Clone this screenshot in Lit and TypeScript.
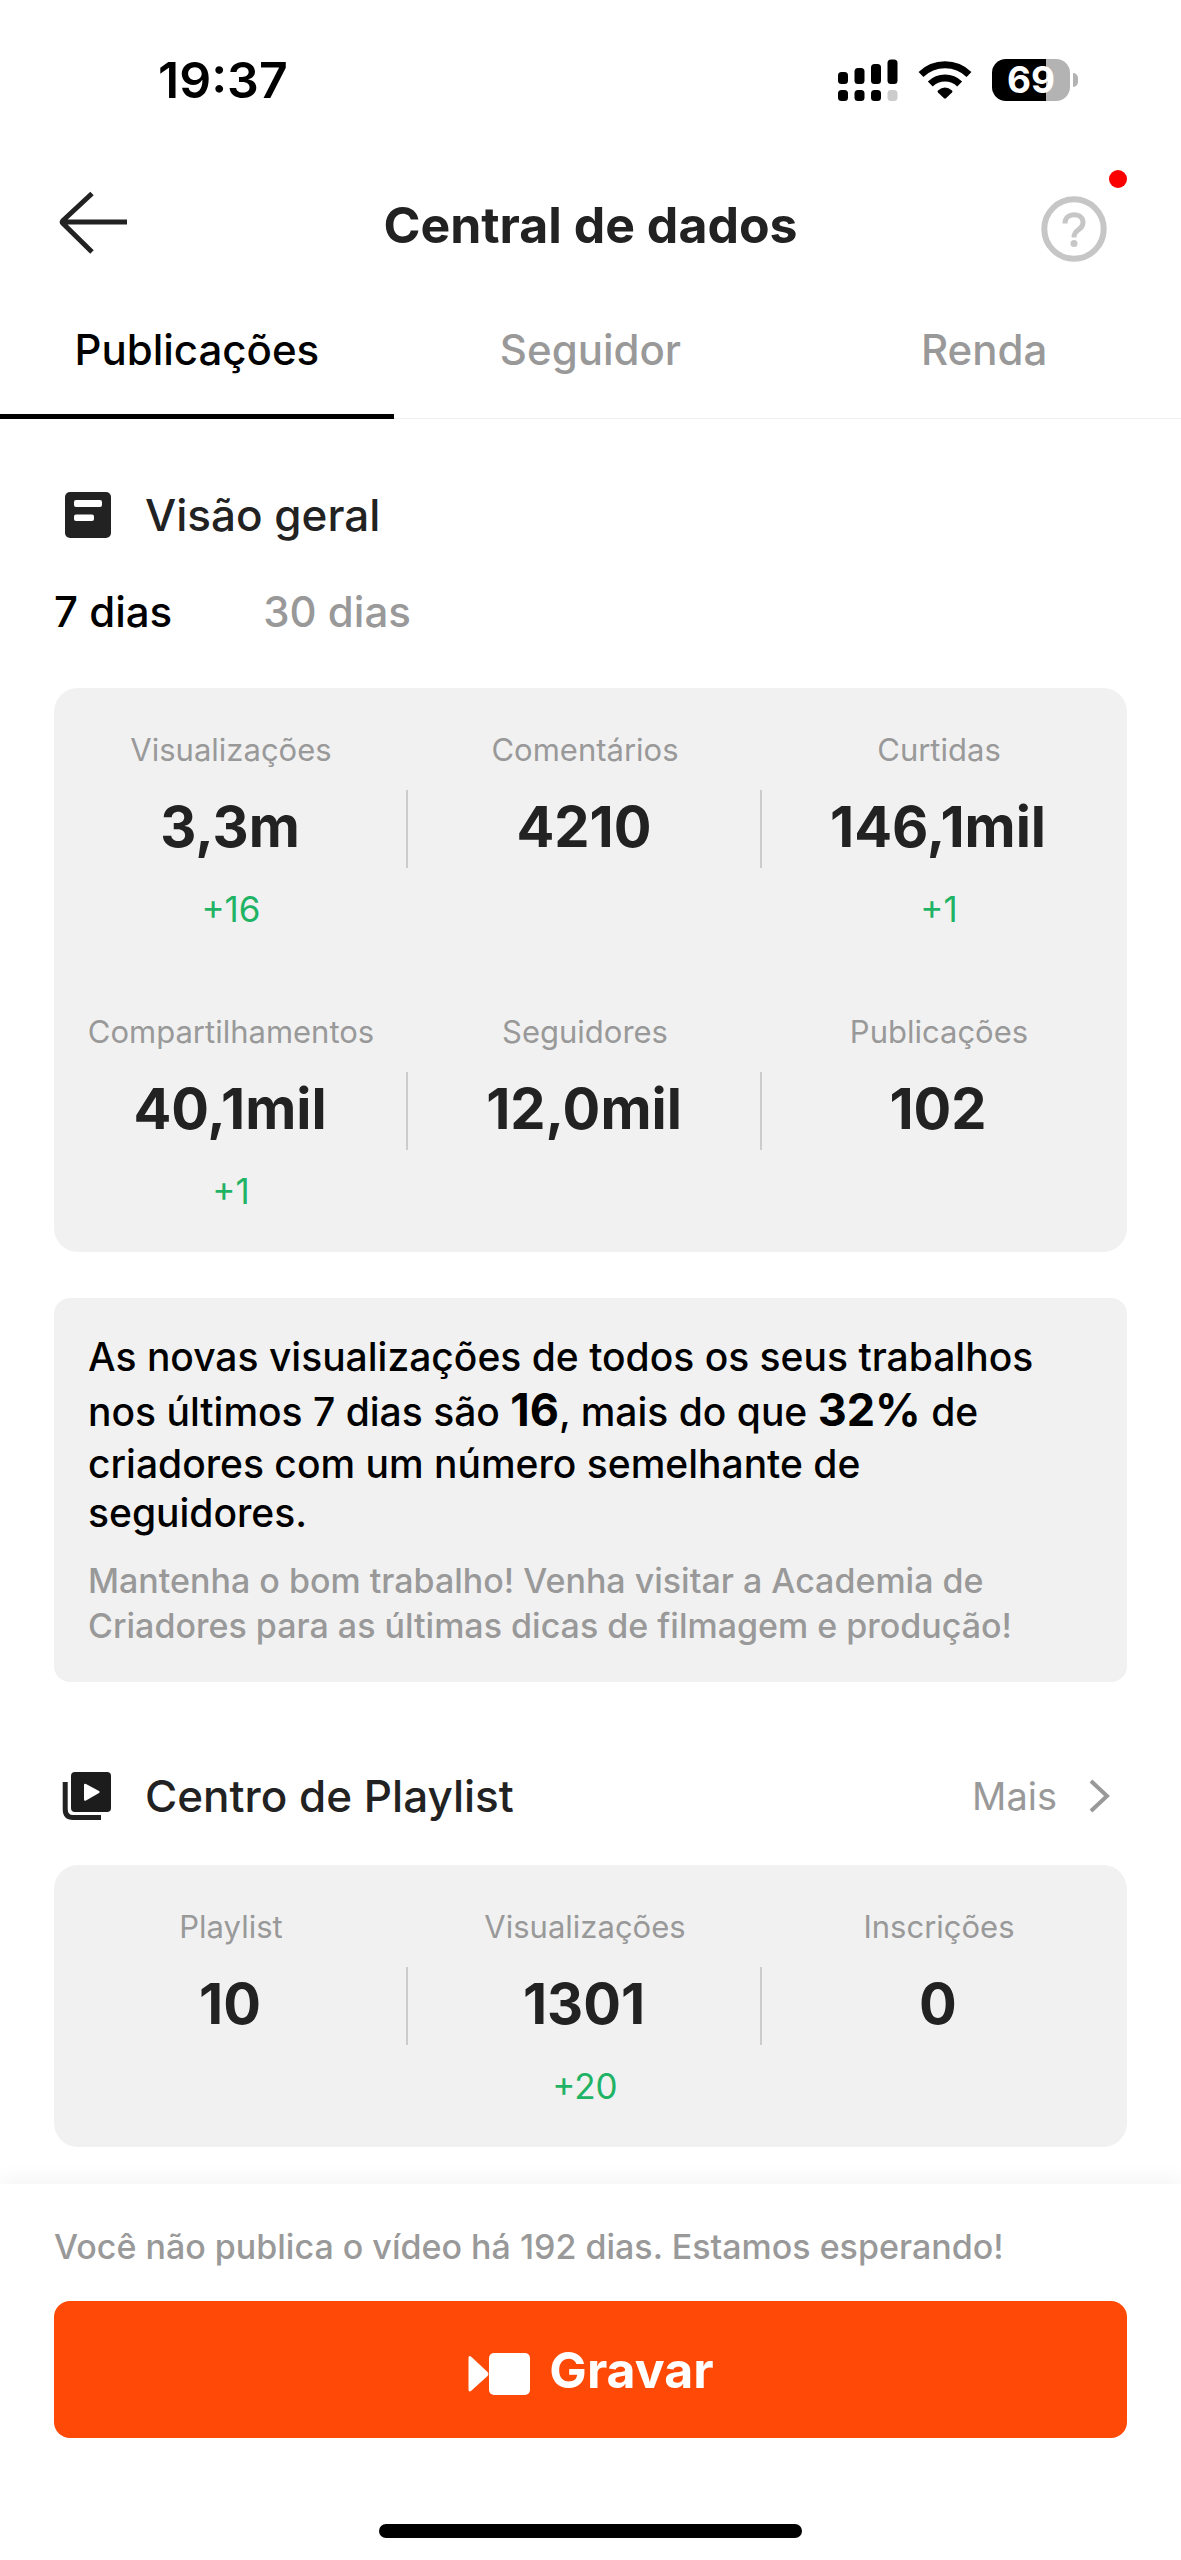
import { LitElement, html, css, svg, nothing } from "lit";
import { customElement, property, state } from "lit/decorators.js";
import { classMap } from "lit/directives/class-map.js";

interface Stat {
  label: string;
  value: string;
  delta?: string;
}

const OVERVIEW: Stat[] = [
  { label: "Visualizações", value: "3,3m", delta: "+16" },
  { label: "Comentários", value: "4210" },
  { label: "Curtidas", value: "146,1mil", delta: "+1" },
  { label: "Compartilhamentos", value: "40,1mil", delta: "+1" },
  { label: "Seguidores", value: "12,0mil" },
  { label: "Publicações", value: "102" },
];

const PLAYLIST: Stat[] = [
  { label: "Playlist", value: "10" },
  { label: "Visualizações", value: "1301", delta: "+20" },
  { label: "Inscrições", value: "0" },
];

const TABS = ["Publicações", "Seguidor", "Renda"];
const PERIODS = ["7 dias", "30 dias"];

@customElement("status-bar")
export class StatusBar extends LitElement {
  static styles = css`
    :host {
      display: flex;
      justify-content: space-between;
      align-items: center;
      height: 160px;
      padding: 0 103px 0 158px;
      color: #000;
    }
    .time {
      font-size: 50px;
      line-height: 60px;
      font-weight: 600;
    }
    .icons {
      display: flex;
      align-items: center;
      gap: 20px;
    }
    svg {
      display: block;
    }
    .battery {
      display: flex;
      align-items: center;
      gap: 3px;
    }
    .cell {
      display: flex;
      align-items: center;
      justify-content: center;
      width: 78px;
      height: 42px;
      border-radius: 14px;
      background: linear-gradient(to right, #000 69%, #b3b3b3 69%);
      color: #fff;
      font-size: 37px;
      line-height: 42px;
      font-weight: 700;
    }
    .nub {
      width: 5px;
      height: 14px;
      border-radius: 0 5px 5px 0;
      background: #b3b3b3;
    }
  `;

  render() {
    return html`
      <span class="time">19:37</span>
      <div class="icons">
        <svg width="60" height="42" viewBox="0 0 60 42" aria-hidden="true">
          <rect x="0" y="13" width="10" height="12" rx="3.5" />
          <rect x="16.5" y="9" width="10" height="16" rx="3.5" />
          <rect x="33" y="5" width="10" height="20" rx="3.5" />
          <rect x="49.5" y="0.5" width="10" height="24.5" rx="3.5" />
          <rect x="0" y="31" width="10" height="11" rx="3.5" />
          <rect x="16.5" y="31" width="10" height="11" rx="3.5" />
          <rect x="33" y="31" width="10" height="11" rx="3.5" />
          <rect x="49.5" y="31" width="10" height="11" rx="3.5" fill="#ccc" />
        </svg>
        <svg width="54" height="42" viewBox="0 0 54 42" aria-hidden="true">
          <g fill="none" stroke="#000" stroke-width="7">
            <path d="M3 15.5 A34.5 34.5 0 0 1 51 15.5" />
            <path d="M12.3 25 A21 21 0 0 1 41.700 25" />
          </g>
          <path
            d="M20 31.500 Q27 25.500 34 31.500 Q35 32.500 34 33.500 L28 39.300 Q27 40.200 26 39.300 L20 33.500 Q19 32.500 20 31.500 Z"
          />
        </svg>
        <div class="battery">
          <span class="cell">69</span>
          <span class="nub"></span>
        </div>
      </div>
    `;
  }
}

@customElement("stat-card")
export class StatCard extends LitElement {
  @property({ attribute: false }) stats: Stat[] = [];

  static styles = css`
    :host {
      display: block;
      border-radius: 24px;
      background: #f1f1f1;
      padding-right: 11px;
    }
    .grid {
      display: grid;
      grid-template-columns: repeat(3, 1fr);
      margin: 0;
    }
    .stat {
      display: flex;
      flex-direction: column;
      align-items: center;
      height: 282px;
      padding-top: 42px;
      box-sizing: border-box;
      text-align: center;
    }
    .label {
      font-size: 31px;
      line-height: 40px;
      color: #999;
    }
    .value {
      align-self: stretch;
      margin: 20px 0 21px;
      padding-bottom: 3px;
      font-size: 56px;
      line-height: 75px;
      font-weight: 700;
      color: #222;
      border-right: 2px solid #ccc;
    }
    .stat:nth-child(3n) .value {
      border-right-color: transparent;
    }
    .delta {
      margin: 0;
      font-size: 35px;
      line-height: 40px;
      color: #1eb365;
    }
  `;

  render() {
    return html`
      <dl class="grid">
        ${this.stats.map(
          (s) => html`
            <div class="stat">
              <dt class="label">${s.label}</dt>
              <dd class="value">${s.value}</dd>
              ${s.delta ? html`<dd class="delta">${s.delta}</dd>` : nothing}
            </div>
          `,
        )}
      </dl>
    `;
  }
}

const overviewIcon = svg`
  <rect x="3" y="3" width="46" height="46" rx="5" fill="#222" />
  <rect x="12" y="11" width="28" height="7" rx="2" fill="#fff" />
  <rect x="12" y="25.500" width="20" height="6.500" rx="2" fill="#fff" />`;

const playlistIcon = svg`
  <rect x="9" y="2" width="40" height="40" rx="4" fill="#1c1c1c" />
  <path d="M22 15 Q22 13 24 14 L37 21 Q38.500 22 37 23 L24 30.500 Q22 31.500 22 29.500 Z" fill="#fff" />
  <path d="M3.200 12 V39 Q3.200 47.500 11 47.500 H39" fill="none" stroke="#222" stroke-width="5" />`;

@customElement("app-root")
export class AppRoot extends LitElement {
  @state() private tab = 0;
  @state() private period = 0;

  static styles = css`
    :host {
      display: flex;
      flex-direction: column;
      min-height: 100vh;
      background: #fff;
      color: #222;
      font-family: Inter, "Liberation Sans", sans-serif;
    }
    button {
      font: inherit;
      color: inherit;
      background: none;
      border: 0;
      padding: 0;
      margin: 0;
      cursor: pointer;
    }
    svg {
      display: block;
      flex: none;
    }
    .header {
      display: grid;
      grid-template-columns: 86px 1fr 86px;
      align-items: center;
      height: 129px;
      padding: 0 58px;
    }
    .title {
      margin: 0;
      text-align: center;
      font-size: 50px;
      line-height: 60px;
      font-weight: 700;
    }
    .back {
      margin-bottom: 4px;
    }
    .help {
      position: relative;
      justify-self: end;
      margin: 8px 16px 0 0;
    }
    .dot {
      position: absolute;
      right: -20px;
      top: -26px;
      width: 18px;
      height: 18px;
      border-radius: 50%;
      background: #fa0000;
    }
    .tabs {
      display: grid;
      grid-template-columns: repeat(3, 1fr);
      height: 129px;
      border-bottom: 1px solid #f0f0f0;
    }
    .tab {
      height: 130px;
      padding-bottom: 3px;
      box-sizing: border-box;
      border-bottom: 5px solid transparent;
      font-size: 42px;
      line-height: 52px;
      font-weight: 500;
      color: #999;
    }
    .tab.on {
      color: #000;
      border-bottom-color: #000;
    }
    .content {
      flex: 1;
      padding: 70px 54px 36px;
    }
    .heading {
      display: flex;
      align-items: center;
      height: 52px;
      padding-left: 8px;
    }
    .heading h2 {
      margin: 0 auto 0 31px;
      font-size: 44px;
      line-height: 52px;
      font-weight: 500;
    }
    .more {
      display: flex;
      align-items: center;
      gap: 31px;
      padding-right: 17px;
      font-size: 38px;
      line-height: 48px;
      color: #999;
      text-decoration: none;
    }
    .periods {
      display: flex;
      gap: 91px;
      margin: 45px 0 50px;
    }
    .period {
      font-size: 42px;
      line-height: 52px;
      font-weight: 500;
      color: #999;
    }
    .period.on {
      color: #000;
    }
    .insight {
      margin: 46px 0 88px;
      padding: 34px 54px 34px 34px;
      border-radius: 16px;
      background: #f1f1f1;
    }
    .summary {
      margin: 0 0 21px;
      font-size: 39px;
      line-height: 49px;
      font-weight: 500;
      color: #000;
    }
    .summary strong {
      font-size: 45px;
      line-height: 58px;
      font-weight: 700;
    }
    .hint {
      margin: 0;
      font-size: 34px;
      line-height: 45px;
      font-weight: 500;
      color: #999;
    }
    .playlist {
      margin-top: 43px;
    }
    .footer {
      display: flex;
      flex-direction: column;
      padding: 40px 54px 22px;
      background: #fff;
      box-shadow: 0 -4px 20px rgba(0, 0, 0, 0.05);
    }
    .notice {
      margin: 0 0 32px;
      font-size: 34px;
      line-height: 45px;
      font-weight: 500;
      color: #999;
    }
    .record {
      display: flex;
      align-items: center;
      justify-content: center;
      gap: 18px;
      height: 137px;
      border-radius: 16px;
      background: #ff4906;
      color: #fff;
      font-size: 50px;
      line-height: 60px;
      font-weight: 700;
    }
    .home {
      align-self: center;
      width: 423px;
      height: 14px;
      margin-top: 86px;
      border-radius: 7px;
      background: #000;
    }
  `;

  render() {
    return html`
      <status-bar></status-bar>

      <header class="header">
        <button class="back" aria-label="Voltar">
          <svg width="70" height="64" viewBox="0 0 70 64" aria-hidden="true">
            <path d="M34 2.500 L5 29.500 Q3.500 31 5 32.500 L34 61 M5 31 H69" fill="none" stroke="#222" stroke-width="5" />
          </svg>
        </button>
        <h1 class="title">Central de dados</h1>
        <button class="help" aria-label="Ajuda">
          <svg width="66" height="66" viewBox="0 0 66 66" aria-hidden="true">
            <circle cx="33" cy="33" r="29.700" fill="none" stroke="#c6c6c6" stroke-width="6" />
            <path
              d="M24 27.500 C24 21.500 28 18.700 33 18.700 C38.500 18.700 42 22 42 26.500 C42 30.500 39.500 32.300 36.500 34.500 C33.800 36.500 33 38 33 41.500"
              fill="none" stroke="#c6c6c6" stroke-width="5" />
            <circle cx="33" cy="47.500" r="3.500" fill="#c6c6c6" />
          </svg>
          <span class="dot"></span>
        </button>
      </header>

      <nav class="tabs" role="tablist">
        ${TABS.map(
          (t, i) => html`
            <button
              role="tab"
              class=${classMap({ tab: true, on: i === this.tab })}
              aria-selected=${i === this.tab}
              @click=${() => (this.tab = i)}
            >${t}</button>
          `,
        )}
      </nav>

      <main class="content">
        <section>
          <div class="heading">
            <svg width="52" height="52" viewBox="0 0 52 52" aria-hidden="true">${overviewIcon}</svg>
            <h2>Visão geral</h2>
          </div>
          <div class="periods">
            ${PERIODS.map(
              (p, i) => html`
                <button
                  class=${classMap({ period: true, on: i === this.period })}
                  aria-pressed=${i === this.period}
                  @click=${() => (this.period = i)}
                >${p}</button>
              `,
            )}
          </div>
          <stat-card .stats=${OVERVIEW}></stat-card>
          <div class="insight">
            <p class="summary">
              As novas visualizações de todos os seus trabalhos nos últimos 7 dias são
              <strong>16</strong>, mais do que <strong>32%</strong> de criadores com um número
              semelhante de seguidores.
            </p>
            <p class="hint">
              Mantenha o bom trabalho! Venha visitar a Academia de Criadores para as últimas dicas
              de filmagem e produção!
            </p>
          </div>
        </section>

        <section>
          <div class="heading">
            <svg width="52" height="52" viewBox="0 0 52 52" aria-hidden="true">${playlistIcon}</svg>
            <h2>Centro de Playlist</h2>
            <a class="more" href="#playlist">
              Mais
              <svg width="22" height="34" viewBox="0 0 22 34" aria-hidden="true">
                <path d="M3 2 L19 17 L3 32" fill="none" stroke="#999" stroke-width="4" />
              </svg>
            </a>
          </div>
          <stat-card class="playlist" .stats=${PLAYLIST}></stat-card>
        </section>
      </main>

      <footer class="footer">
        <p class="notice">Você não publica o vídeo há 192 dias. Estamos esperando!</p>
        <button class="record">
          <svg width="64" height="52" viewBox="0 -8 64 52" aria-hidden="true">
            <rect x="22" y="1" width="41" height="42" rx="5" fill="#fff" />
            <path d="M1.500 6.500 Q1.500 2.500 4.500 5 L20 19.500 Q23 22 20 24.500 L4.500 38.500 Q1.500 41 1.500 37.500 Z" fill="#fff" />
          </svg>
          Gravar
        </button>
        <div class="home"></div>
      </footer>
    `;
  }
}
